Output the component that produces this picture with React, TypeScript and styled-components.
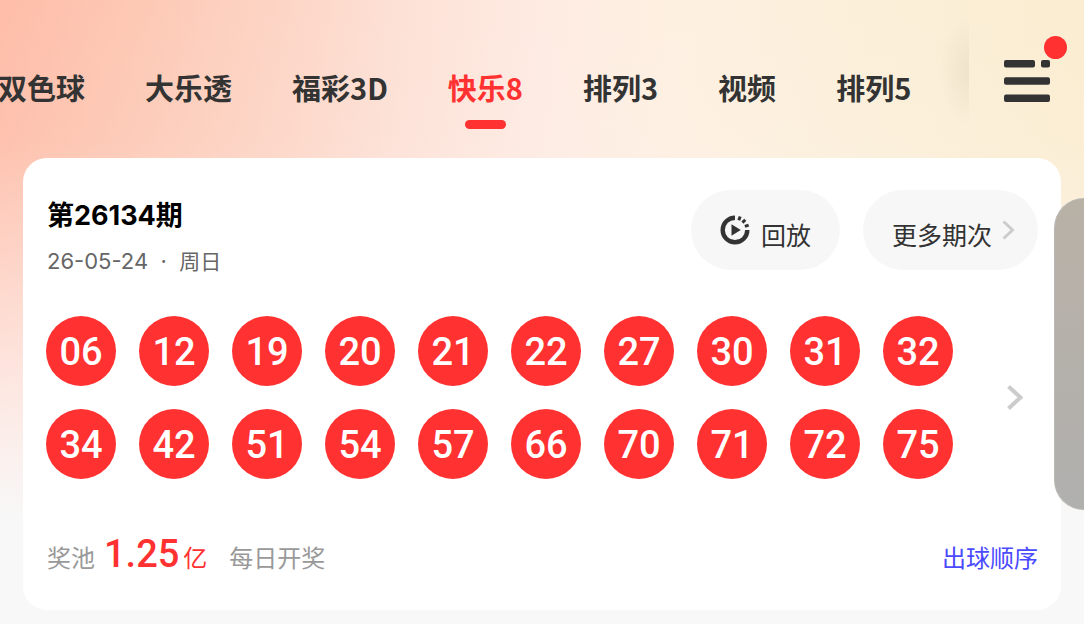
import React, { useState } from "react";
import styled, { createGlobalStyle } from "styled-components";

const cjk = `"Noto Sans CJK SC", sans-serif`;
const red = "#ff3131";
const ink = "#333333";

const GlobalStyle = createGlobalStyle`
  * { box-sizing: border-box; }
  body {
    margin: 0;
    background: #f8f8f8;
    font-family: ${cjk};
    color: ${ink};
    overflow: hidden;
  }
  button { border: 0; padding: 0; background: none; font: inherit; color: inherit; cursor: pointer; }
  ol { list-style: none; margin: 0; padding: 0; }
`;

const Page = styled.div`
  position: relative;
  min-height: 100vh;
  padding-bottom: 14px;
  background:
    linear-gradient(180deg, rgba(248, 248, 248, 0) 0, rgba(248, 248, 248, 0.08) 140px, rgba(253, 244, 243, 0.75) 380px, #f8f8f8 520px),
    linear-gradient(90deg, #febda8 0%, #fdc8b4 12%, #fdd4c4 25%, #fde1d6 37%, #feebe2 50%, #fef0e1 63%, #fbefd9 80%, #fbedd1 100%);
`;

const Header = styled.header`
  display: flex;
`;

const Tabs = styled.nav`
  position: relative;
  flex: 1;
  min-width: 0;
  overflow: hidden;
  padding: 67px 0 29px;
  &::after {
    content: "";
    position: absolute;
    top: 16px;
    right: 0;
    width: 30px;
    height: 110px;
    background: radial-gradient(ellipse at 100% 50%, rgba(90, 70, 50, 0.07), rgba(90, 70, 50, 0) 70%);
  }
`;

const TabTrack = styled.div`
  display: flex;
  gap: 60px;
  margin-left: -2px;
`;

const Tab = styled.button<{ $active: boolean }>`
  flex: none;
  display: flex;
  flex-direction: column;
  align-items: center;
  gap: 13px;
  font-size: 29px;
  font-weight: 700;
  line-height: 40px;
  white-space: nowrap;
  color: ${(p) => (p.$active ? red : ink)};
  &::after {
    content: "";
    width: 41px;
    height: 9px;
    border-radius: 5px;
    background: ${(p) => (p.$active ? red : "transparent")};
  }
`;

const MenuButton = styled.button`
  position: relative;
  flex: none;
  width: 115px;
  padding-top: 4px;
  svg { display: block; margin: 0 auto; }
`;

const Dot = styled.span`
  position: absolute;
  top: 36px;
  right: 17px;
  width: 23px;
  height: 23px;
  border-radius: 50%;
  background: ${red};
`;

const Card = styled.main`
  margin: 0 23px;
  padding: 32px 23px 29px;
  border-radius: 24px;
  background: #ffffff;
`;

const CardHead = styled.div`
  display: flex;
  justify-content: space-between;
  align-items: flex-start;
`;

const Issue = styled.div`
  padding: 9px 0 0 1px;
`;

const IssueTitle = styled.h1`
  margin: 0 0 14px;
  font: 700 27px/34px Inter, ${cjk};
  color: #000000;
`;

const IssueDate = styled.p`
  margin: 0;
  font: 400 22px/28px Inter, ${cjk};
  color: #666666;
  white-space: pre;
`;

const Weekday = styled.span`
  font-size: 21px;
`;

const Actions = styled.div`
  display: flex;
  gap: 23px;
`;

const Pill = styled.button<{ $gap: number; $end: number }>`
  display: flex;
  align-items: center;
  gap: ${(p) => p.$gap}px;
  min-height: 80px;
  padding: 0 ${(p) => p.$end}px 0 29px;
  border-radius: 40px;
  background: #f7f7f7;
  font-size: 25px;
  line-height: 36px;
  span { padding-top: 8px; }
`;

const Draw = styled.div`
  display: flex;
  justify-content: space-between;
  align-items: center;
  margin-top: 40px;
`;

const Balls = styled.ol`
  display: grid;
  grid-template-columns: repeat(10, 70px);
  gap: 23px;
`;

const Ball = styled.li`
  height: 70px;
  border-radius: 50%;
  background: ${red};
  color: #ffffff;
  font: 500 38px/72px Roboto, sans-serif;
  text-align: center;
`;

const NextButton = styled.button`
  display: flex;
  justify-content: center;
  width: 47px;
  padding: 20px 0;
`;

const CardFoot = styled.div`
  display: flex;
  align-items: baseline;
  margin-top: 51px;
  padding-left: 1px;
  font-size: 24px;
  line-height: 48px;
  color: #999999;
`;

const Amount = styled.strong`
  margin: 0 4px 0 9px;
  font: 500 38px/48px Roboto, sans-serif;
  color: ${red};
`;

const Unit = styled.span`
  margin-right: 22px;
  color: ${red};
`;

const Schedule = styled.span`
  font-size: 24px;
`;

const OrderLink = styled.a`
  margin-left: auto;
  color: #4a4aff;
  text-decoration: none;
`;

const EdgeHandle = styled.aside`
  position: absolute;
  top: 198px;
  right: 0;
  width: 30px;
  height: 312px;
  border-radius: 30px 0 0 30px;
  border: 1px solid #b9b8b4;
  border-right: 0;
  background: linear-gradient(180deg, #b8b1a6 0%, #b5b0aa 45%, #b0b0ae 100%);
`;

const MenuIcon = () => (
  <svg width="46" height="42" viewBox="0 0 46 42" fill={ink} aria-hidden="true">
    <rect width="31" height="7.5" rx="2" />
    <rect x="37" width="9" height="7.5" rx="2" />
    <rect y="17.3" width="46" height="7.5" rx="2" />
    <rect y="34.5" width="46" height="7.5" rx="2" />
  </svg>
);

const ReplayIcon = () => (
  <svg width="30" height="30" viewBox="-15 -15 30 30" aria-hidden="true">
    <path d="M0-12.3A12.3 12.3 0 1 0 12.3 0" fill="none" stroke={ink} strokeWidth="4.4" />
    <path d="M-3.5-5.7V5.7L5.8 0Z" fill={ink} />
    <g stroke={ink} strokeWidth="3">
      {[21, 45, 70].map((a) => (
        <path key={a} d="M0-14.5V-10.5" transform={`rotate(${a})`} />
      ))}
    </g>
  </svg>
);

const Chevron = ({ w, h, stroke }: { w: number; h: number; stroke: number }) => (
  <svg width={w} height={h} viewBox={`0 0 ${w} ${h}`} fill="none" stroke="#cccccc" strokeWidth={stroke} aria-hidden="true">
    <path d={`M1.5 1.5L${w - 2.5} ${h / 2}L1.5 ${h - 1.5}`} />
  </svg>
);

const tabs = ["双色球", "大乐透", "福彩3D", "快乐8", "排列3", "视频", "排列5"];
const numbers = [
  "06", "12", "19", "20", "21", "22", "27", "30", "31", "32",
  "34", "42", "51", "54", "57", "66", "70", "71", "72", "75",
];

export default function App() {
  const [active, setActive] = useState("快乐8");
  return (
    <>
      <GlobalStyle />
      <Page>
        <Header>
          <Tabs>
            <TabTrack>
              {tabs.map((t) => (
                <Tab key={t} $active={t === active} onClick={() => setActive(t)}>
                  {t}
                </Tab>
              ))}
            </TabTrack>
          </Tabs>
          <MenuButton aria-label="菜单">
            <MenuIcon />
            <Dot />
          </MenuButton>
        </Header>
        <Card>
          <CardHead>
            <Issue>
              <IssueTitle>第26134期</IssueTitle>
              <IssueDate>
                26-05-24{"  ·  "}
                <Weekday>周日</Weekday>
              </IssueDate>
            </Issue>
            <Actions>
              <Pill $gap={11} $end={29}>
                <ReplayIcon />
                <span>回放</span>
              </Pill>
              <Pill $gap={10} $end={23}>
                <span>更多期次</span>
                <Chevron w={13} h={20} stroke={3} />
              </Pill>
            </Actions>
          </CardHead>
          <Draw>
            <Balls>
              {numbers.map((n) => (
                <Ball key={n}>{n}</Ball>
              ))}
            </Balls>
            <NextButton aria-label="查看详情">
              <Chevron w={16} h={25} stroke={4} />
            </NextButton>
          </Draw>
          <CardFoot>
            <span>奖池</span>
            <Amount>1.25</Amount>
            <Unit>亿</Unit>
            <Schedule>每日开奖</Schedule>
            <OrderLink href="#order">出球顺序</OrderLink>
          </CardFoot>
        </Card>
        <EdgeHandle />
      </Page>
    </>
  );
}
